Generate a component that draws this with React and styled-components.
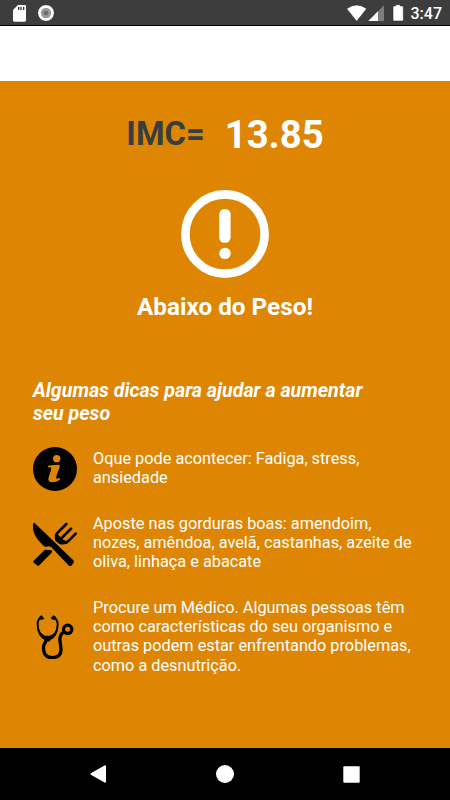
import React from "react";
import styled, { createGlobalStyle } from "styled-components";

const GlobalStyle = createGlobalStyle`
	* {
		box-sizing: border-box;
	}
	body {
		margin: 0;
		font-family: Roboto, sans-serif;
	}
`;

const tips = [
	{
		icon: InfoIcon,
		lines: ["Oque pode acontecer: Fadiga, stress,", "ansiedade"],
	},
	{
		icon: FoodIcon,
		lines: [
			"Aposte nas gorduras boas: amendoim,",
			"nozes, amêndoa, avelã, castanhas, azeite de",
			"oliva, linhaça e abacate",
		],
	},
	{
		icon: DoctorIcon,
		lines: [
			"Procure um Médico. Algumas pessoas têm",
			"como características do seu organismo e",
			"outras podem estar enfrentando problemas,",
			"como a desnutrição.",
		],
	},
];

function App() {
	return (
		<Screen>
			<GlobalStyle />
			<StatusBar>
				<StatusLeft />
				<StatusRight />
				<Clock>3:47</Clock>
			</StatusBar>
			<Toolbar />
			<Content>
				<ResultRow>
					<ResultLabel>IMC=</ResultLabel>
					<ResultValue>13.85</ResultValue>
				</ResultRow>
				<AlertIcon />
				<Status>Abaixo do Peso!</Status>
				<TipsTitle>
					<Line>Algumas dicas para ajudar a aumentar</Line>
					<Line>seu peso</Line>
				</TipsTitle>
				<Tips>
					{tips.map(({ icon: Icon, lines }) => (
						<Tip key={lines[0]}>
							<Icon />
							<TipText>
								{lines.map((line) => (
									<Line key={line}>{line}</Line>
								))}
							</TipText>
						</Tip>
					))}
				</Tips>
			</Content>
			<NavBar>
				<svg width="16" height="18" viewBox="0 0 16 18">
					<path d="M.8 8.3 14.6.4Q16 0 16 1v16q0 1-1.4.6L.8 9.7Q0 9 .8 8.3Z" fill="#fff" />
				</svg>
				<svg width="18" height="18" viewBox="0 0 18 18">
					<circle cx="9" cy="9" r="9" fill="#fff" />
				</svg>
				<svg width="17" height="17" viewBox="0 0 17 17">
					<rect x=".3" y=".3" width="16.4" height="16.4" rx="1" fill="#fff" />
				</svg>
			</NavBar>
		</Screen>
	);
}

// sd card and sync dot
function StatusLeft() {
	return (
		<svg width="60" height="25" viewBox="0 0 180 75">
			<path d="M54 15h21q3 0 3 3v43q0 4-4 4H43q-4 0-4-4V30Z" fill="#fff" />
			<path d="M56 21v9M63 21v9M71 21v9" stroke="#333" strokeWidth="4" />
			<circle cx="138" cy="39" r="25" fill="#fff" stroke="#222" strokeWidth="2" />
			<circle cx="138" cy="39" r="15.5" fill="#999" />
			<circle cx="138" cy="39" r="7" fill="#6b6b6b" />
		</svg>
	);
}

// wifi, signal and battery
function StatusRight() {
	return (
		<StatusIcons width="60" height="25" viewBox="45 0 180 75">
			<path d="M50 26Q80 4 110 26L80 64Z" fill="#fff" stroke="#222" strokeWidth="1.5" />
			<path d="M162 16v47h-47Z" fill="#7d7d7d" />
			<path d="M144 34v29h-29Z" fill="#fff" />
			<path d="M197 14h14v4h6q3 0 3 3v39q0 3-3 3h-25q-3 0-3-3V21q0-3 3-3h5Z" fill="#fff" stroke="#222" strokeWidth="1.5" />
		</StatusIcons>
	);
}

function AlertIcon() {
	return (
		<AlertSvg viewBox="0 0 88 88">
			<circle cx="44" cy="44" r="39.6" fill="none" stroke="#fff" strokeWidth="8.6" />
			<rect x="38.2" y="19" width="11.4" height="33.7" rx="5.2" fill="#fff" />
			<circle cx="44" cy="63.4" r="5.7" fill="#fff" />
		</AlertSvg>
	);
}

function InfoIcon() {
	return (
		<TipIcon viewBox="39 36 132 132">
			<circle cx="105" cy="102" r="66" />
			<circle cx="110" cy="71" r="11" fill="#de8604" />
			<path
				d="M84 92Q100 89 116 89Q121 89 119 96L109 124Q106 132 112 131L120 128L119 135Q106 143 94 142Q82 140 86 127L93 105Q95 98 91 97L84 97Z"
				fill="#de8604"
			/>
		</TipIcon>
	);
}

function FoodIcon() {
	return (
		<TipIcon viewBox="39 33 132 132">
			<path d="M44 36 160 148Q163 152 160 157L154 164Q151 167 147 164L94 109Q87 103 80 107Q75 109 69 103Q34 70 39 41Q39 34 44 36Z" />
			<path d="M73 118Q77 114 82 117L94 117Q98 121 94 126L58 163Q55 167 51 163L41 155Q38 152 41 149Z" />
			<path
				d="M139 39 113 65Q104 74 112 86Q118 98 130 96Q139 97 147 88L167 68M153 53 125 81"
				fill="none"
				stroke="#000"
				strokeWidth="8"
				strokeLinecap="round"
			/>
			<path d="M110 67 121 78 130 86 144 92Q134 102 124 99L107 91Q101 78 110 67Z" />
		</TipIcon>
	);
}

function DoctorIcon() {
	return (
		<TipIcon viewBox="39 45 132 132">
			<g fill="none" stroke="#000">
				<path d="M63 52Q53 57 53 73Q54 108 78 115" strokeWidth="6" />
				<path d="M102 52Q112 57 113 73Q112 106 89 115" strokeWidth="6" />
				<path d="M80 118 71 137Q67 172 96 173Q124 172 123 148Q122 136 120 124Q118 105 130 97" strokeWidth="10" />
				<circle cx="143" cy="88" r="12.5" strokeWidth="10" />
			</g>
			<path d="M58 50 65 46 73 56 67 59 57 59ZM107 50 100 46 92 55 98 59 108 59Z" />
			<path d="M51 79Q61 103 76 107L90 107Q105 101 115 80Q112 111 92 119L87 125 77 122Q53 112 51 79Z" />
		</TipIcon>
	);
}

const Screen = styled.div`
	width: 450px;
	height: 800px;
	display: flex;
	flex-direction: column;
	background: #de8604;
	overflow: hidden;
`;

const StatusBar = styled.div`
	height: 26px;
	display: flex;
	background: #3d3d3d;
	border-bottom: 1px solid #000;
`;

const StatusIcons = styled.svg`
	margin-left: auto;
`;

const Clock = styled.span`
	width: 45px;
	padding-left: 5.5px;
	color: #fff;
	font-size: 16px;
	font-weight: 500;
	line-height: 28px;
`;

const Toolbar = styled.div`
	height: 55px;
	background: #fff;
`;

const Content = styled.div`
	flex: 1;
	display: flex;
	flex-direction: column;
	align-items: center;
`;

const ResultRow = styled.div`
	height: 60px;
	margin-top: 22px;
	display: flex;
	align-items: center;
	gap: 20px;
	font-weight: 700;
`;

const ResultLabel = styled.span`
	padding-top: 1px;
	color: #373e40;
	font-size: 32.7px;
`;

const ResultValue = styled.span`
	padding-top: 2px;
	color: #fff;
	font-size: 38.3px;
`;

const AlertSvg = styled.svg`
	width: 88px;
	height: 88px;
	margin-top: 27px;
`;

const Status = styled.div`
	margin-top: 14px;
	color: #fff;
	font-size: 24.3px;
	font-weight: 700;
	line-height: 29px;
`;

const TipsTitle = styled.div`
	align-self: flex-start;
	margin: 58px 0 0 33px;
	color: #fff;
	font-size: 19.65px;
	font-style: italic;
	font-weight: 700;
	line-height: 23px;
`;

const Line = styled.div`
	white-space: nowrap;
`;

const Tips = styled.div`
	align-self: stretch;
	margin-top: 24px;
	padding-left: 33px;
	display: flex;
	flex-direction: column;
	gap: 26.3px;
`;

const Tip = styled.div`
	display: flex;
	align-items: center;
	gap: 16px;
`;

const TipIcon = styled.svg`
	width: 44px;
	height: 44px;
	margin: -2px 0 -4px;
	flex-shrink: 0;
`;

const TipText = styled.div`
	color: #fff;
	font-size: 16.3px;
	line-height: 19.25px;
`;

const NavBar = styled.div`
	height: 52px;
	padding: 0 90px;
	display: flex;
	align-items: center;
	justify-content: space-between;
	background: #000;
`;

export default App;
